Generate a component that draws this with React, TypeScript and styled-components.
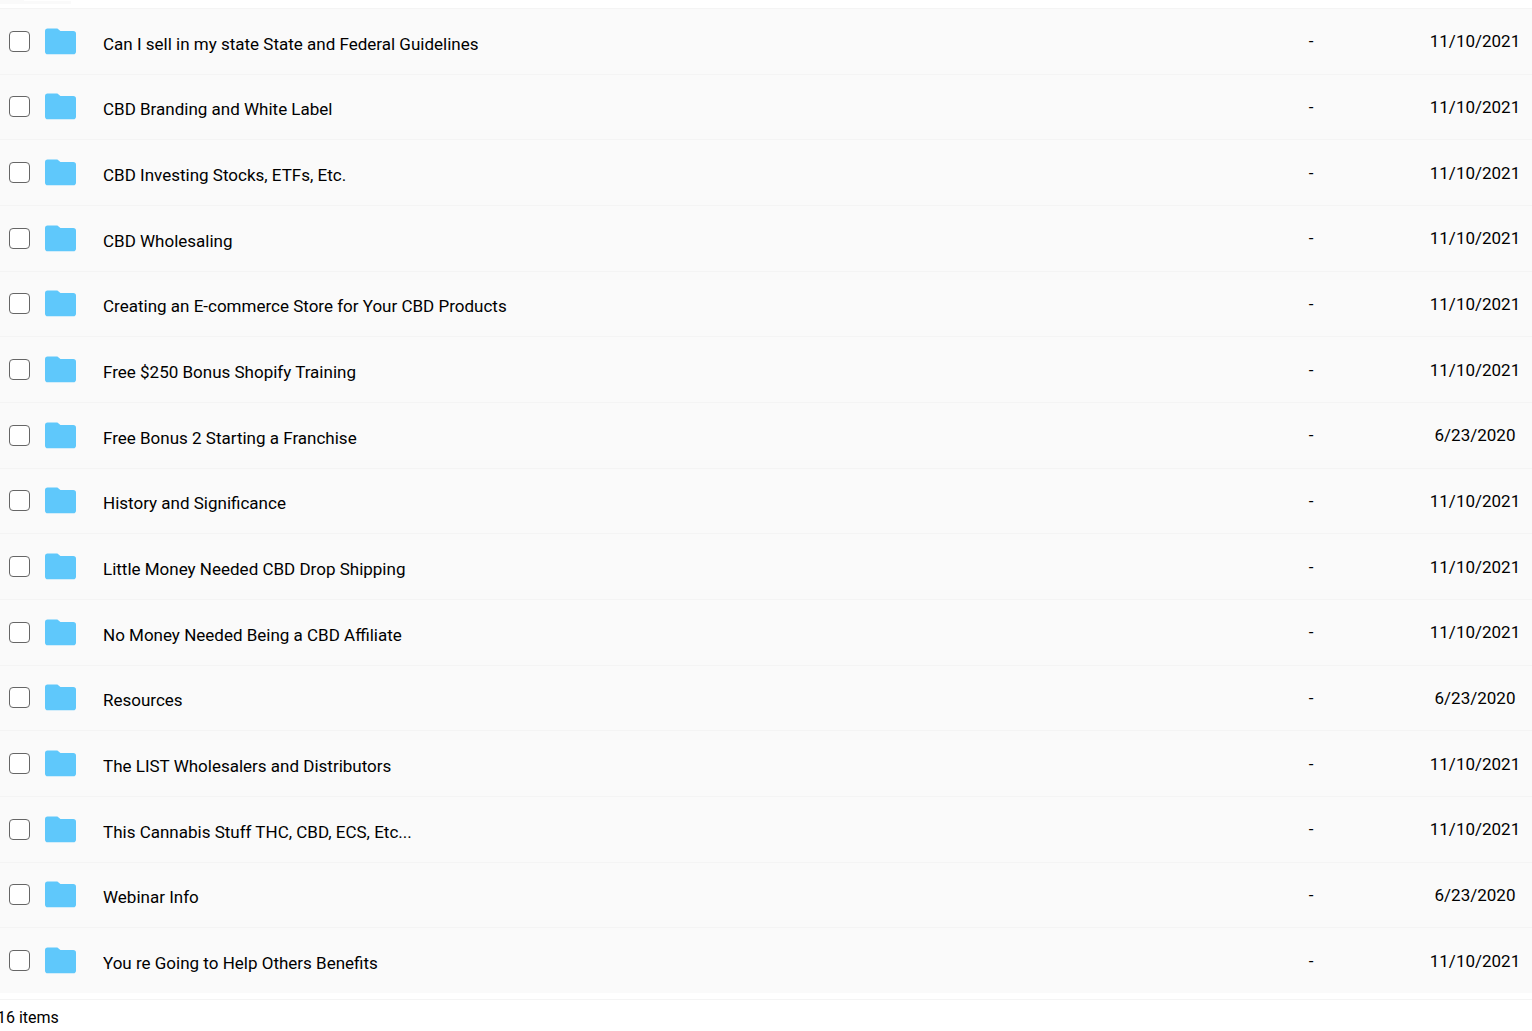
import React, { useState } from "react";
import styled, { createGlobalStyle } from "styled-components";

const GlobalStyle = createGlobalStyle`
  *, *::before, *::after { box-sizing: border-box; }
  body {
    margin: 0;
    background: #fff;
    color: #000;
    font-family: Roboto, "Liberation Sans", sans-serif;
  }
`;

const Page = styled.main`
  display: flex;
  flex-direction: column;
  min-height: 100vh;
  overflow-x: hidden;
`;

const TabStrip = styled.div`
  flex: none;
  height: 8px;
`;

const TabEdge = styled.div`
  width: 71px;
  height: 4px;
  padding-left: 24px;
  background: #fafafa;
`;

const TabFace = styled.div`
  height: 1px;
  background: #fff;
`;

const ListArea = styled.section`
  flex: 1;
  display: grid;
`;

const FileTable = styled.table`
  width: 100%;
  height: 100%;
  table-layout: fixed;
  border-collapse: separate;
  border-spacing: 0;
  background: #fafafa;
  font-size: 17px;
  line-height: 24px;
`;

const CheckColumn = styled.col`
  width: 44px;
`;

const IconColumn = styled.col`
  width: 59px;
`;

const SizeColumn = styled.col`
  width: 214px;
`;

const DateColumn = styled.col`
  width: 114px;
`;

const Cell = styled.td<{ $align?: string }>`
  padding: 0;
  border-top: 1px solid #f4f4f4;
  vertical-align: middle;
  text-align: ${({ $align }) => $align ?? "left"};
`;

const NameCell = styled(Cell)`
  padding: 5px 0 0;
  overflow: hidden;
  text-overflow: ellipsis;
  white-space: nowrap;
  font-weight: 400;
`;

const Checkbox = styled.input`
  appearance: none;
  display: block;
  width: 21px;
  height: 21px;
  margin: 0 0 0 9px;
  border: 1px solid #666;
  border-radius: 4px;
  background: #fff;
  cursor: pointer;

  &:checked {
    background: #5fc8fb;
  }
`;

const FolderSvg = styled.svg`
  display: block;
  width: 33px;
  height: 27px;
`;

const FooterBar = styled.footer`
  flex: none;
  height: 32px;
  margin-top: 6px;
  padding-top: 6px;
  border-top: 1px solid #f4f4f4;
  font-size: 16px;
  line-height: 24px;
  text-indent: -3px;
`;

const FolderIcon = () => (
  <FolderSvg viewBox="0 0 33 27" aria-hidden="true">
    <path
      d="M4 0.4H13.4L16.4 3H29.2A2.8 2.8 0 0 1 32 5.8V23.4A2.8 2.8 0 0 1 29.2 26.2H3.8A2.8 2.8 0 0 1 1 23.4V3.2A2.8 2.8 0 0 1 4 0.4Z"
      fill="#5fc8fb"
    />
  </FolderSvg>
);

interface Folder {
  name: string;
  date: string;
}

const folders: Folder[] = [
  { name: "Can I sell in my state State and Federal Guidelines", date: "11/10/2021" },
  { name: "CBD Branding and White Label", date: "11/10/2021" },
  { name: "CBD Investing Stocks, ETFs, Etc.", date: "11/10/2021" },
  { name: "CBD Wholesaling", date: "11/10/2021" },
  { name: "Creating an E-commerce Store for Your CBD Products", date: "11/10/2021" },
  { name: "Free $250 Bonus Shopify Training", date: "11/10/2021" },
  { name: "Free Bonus 2 Starting a Franchise", date: "6/23/2020" },
  { name: "History and Significance", date: "11/10/2021" },
  { name: "Little Money Needed CBD Drop Shipping", date: "11/10/2021" },
  { name: "No Money Needed Being a CBD Affiliate", date: "11/10/2021" },
  { name: "Resources", date: "6/23/2020" },
  { name: "The LIST Wholesalers and Distributors", date: "11/10/2021" },
  { name: "This Cannabis Stuff THC, CBD, ECS, Etc...", date: "11/10/2021" },
  { name: "Webinar Info", date: "6/23/2020" },
  { name: "You re Going to Help Others Benefits", date: "11/10/2021" },
];

const FolderRow = ({ folder, index }: { folder: Folder; index: number }) => {
  const [checked, setChecked] = useState(false);
  const labelId = `folder-${index}`;
  return (
    <tr>
      <Cell>
        <Checkbox
          type="checkbox"
          aria-labelledby={labelId}
          checked={checked}
          onChange={(e) => setChecked(e.target.checked)}
        />
      </Cell>
      <Cell>
        <FolderIcon />
      </Cell>
      <NameCell as="th" scope="row" id={labelId}>
        {folder.name}
      </NameCell>
      <Cell $align="center">-</Cell>
      <Cell $align="center">{folder.date}</Cell>
    </tr>
  );
};

export default function App() {
  return (
    <>
      <GlobalStyle />
      <Page>
        <TabStrip>
          <TabEdge>
            <TabFace />
          </TabEdge>
        </TabStrip>
        <ListArea>
          <FileTable>
            <colgroup>
              <CheckColumn />
              <IconColumn />
              <col />
              <SizeColumn />
              <DateColumn />
            </colgroup>
            <tbody>
              {folders.map((folder, i) => (
                <FolderRow key={folder.name} folder={folder} index={i} />
              ))}
            </tbody>
          </FileTable>
        </ListArea>
        <FooterBar>16 items</FooterBar>
      </Page>
    </>
  );
}
